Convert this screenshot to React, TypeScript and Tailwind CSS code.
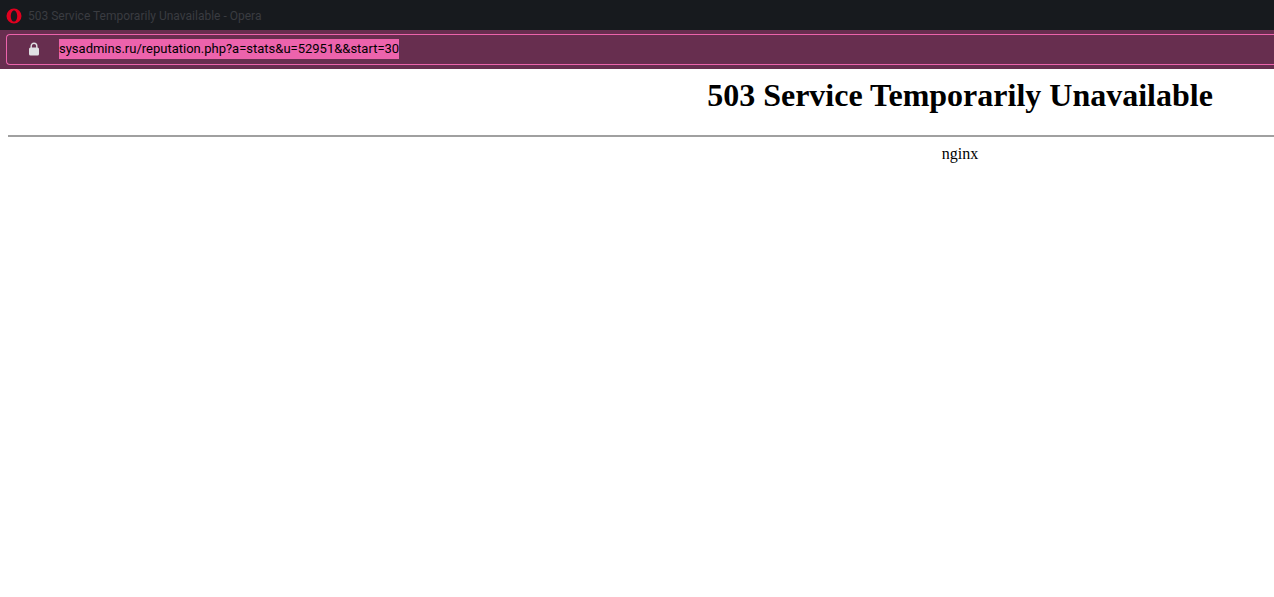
import React from 'react';

const OperaLogo = () => (
  <svg width="16" height="16" viewBox="0 0 16 16" className="shrink-0">
    <path
      fillRule="evenodd"
      fill="#e0001f"
      d="M8 0.5a7.5 7.5 0 1 0 0 15a7.5 7.5 0 1 0 0-15zM8 2.4c1.9 0 3.2 2.5 3.2 5.6s-1.3 5.6-3.2 5.6s-3.2-2.5-3.2-5.6s1.3-5.6 3.2-5.6z"
    />
  </svg>
);

const LockIcon = () => (
  <svg width="12" height="14" viewBox="0 0 12 14" className="shrink-0">
    <path d="M3.2 6V4a2.8 2.8 0 0 1 5.6 0v2" fill="none" stroke="#dfe0e3" strokeWidth="1.4" />
    <rect x="1" y="5.5" width="10" height="8" rx="1.5" fill="#dfe0e3" />
  </svg>
);

const App: React.FC = () => {
  return (
    <div className="h-[597px] w-[1274px] overflow-hidden bg-white">
      {/* Window title */}
      <div className="flex h-[30px] items-center gap-[6px] bg-[#171a1e] pl-[6px] pt-px font-['Roboto',sans-serif] text-xs text-[#3a3c41]">
        <OperaLogo />
        <span>503 Service Temporarily Unavailable - Opera</span>
      </div>

      {/* Address bar */}
      <div className="h-[39px] bg-[#672e4f] py-[4px] pl-[6px]">
        <div className="flex h-[31px] items-center rounded-l-[4px] border border-r-0 border-[#ec63ac] pb-px pl-[21px] font-['Roboto',sans-serif] text-[13px] text-black">
          <LockIcon />
          <span className="ml-[19px] bg-[#ec63ac] leading-[20px]">sysadmins.ru/reputation.php?a=stats&amp;u=52951&amp;&amp;start=30</span>
        </div>
      </div>

      {/* Error page, wider than the window */}
      <div className="w-[1912px] pl-[8px] font-['Liberation_Serif',serif] text-black">
        <h1 className="pt-[8px] pb-[21px] text-center text-[32px] leading-[37px] font-bold">503 Service Temporarily Unavailable</h1>
        <hr className="border-t-2 border-[#a0a0a0]" />
        <div className="pt-[8px] text-center text-base leading-[18px]">nginx</div>
      </div>
    </div>
  );
};

export default App;
